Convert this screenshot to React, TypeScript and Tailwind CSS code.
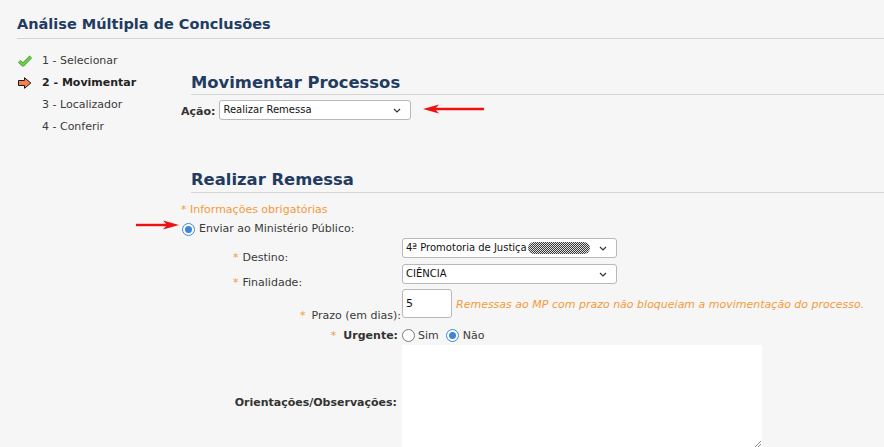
import React from "react";

function Radio({ checked }: { checked?: boolean }) {
  return checked ? (
    <span className="w-[13px] h-[13px] rounded-full border border-[#3b86d8] bg-white flex items-center justify-center shrink-0">
      <span className="w-[7px] h-[7px] rounded-full bg-[#3b86d8]" />
    </span>
  ) : (
    <span className="w-[13px] h-[13px] rounded-full border border-[#7a7a7a] bg-white shrink-0" />
  );
}

function Chevron() {
  return (
    <svg width="8" height="5" viewBox="0 0 8 5" className="shrink-0">
      <path d="M1 1 L4 4 L7 1" fill="none" stroke="#333" strokeWidth="1.2" />
    </svg>
  );
}

function Select({ w, children }: { w: string; children: React.ReactNode }) {
  return (
    <div className={`${w} h-[20px] bg-white border border-[#b8b8b8] rounded-[3px] flex items-center pl-[3px] pr-[9px] text-[10px] text-[#111]`}>
      <div className="flex-1 flex items-center min-w-0 whitespace-nowrap">{children}</div>
      <Chevron />
    </div>
  );
}

function RedArrow({ dir }: { dir: "left" | "right" }) {
  if (dir === "left") {
    return (
      <svg width="62" height="10" viewBox="0 0 62 10">
        <line x1="12" y1="5" x2="61" y2="5" stroke="#ee1111" strokeWidth="2.4" />
        <polygon points="0,5 16,0.5 12,5 16,9.5" fill="#ee1111" />
      </svg>
    );
  }
  return (
    <svg width="43" height="10" viewBox="0 0 43 10">
      <line x1="0" y1="5" x2="32" y2="5" stroke="#ee1111" strokeWidth="2.4" />
      <polygon points="43,5 27,0.5 31,5 27,9.5" fill="#ee1111" />
    </svg>
  );
}

export default function App() {
  return (
    <div className="w-[884px] h-[447px] overflow-hidden bg-[#f6f6f6] text-[#3a3a3a] text-[11px] leading-[14px] font-['DejaVu_Sans',sans-serif]">
      <h1 className="ml-[17px] mt-[15px] pb-[5px] border-b border-[#d4d4d4] text-[14.5px] leading-[18px] font-bold text-[#223b60]">
        Análise Múltipla de Conclusões
      </h1>
      <div className="flex">
        <div className="w-[181px] shrink-0 pl-[18px] pt-[11px]">
          <div className="h-[22px] flex items-center">
            <svg width="14" height="12" viewBox="0 0 14 12" className="mr-[10px]">
              <path d="M1.2 6.2 L5 9.8 L12.8 1.8" fill="none" stroke="#2f9a2a" strokeWidth="3.4" strokeLinejoin="round" />
              <path d="M1.2 6.2 L5 9.8 L12.8 1.8" fill="none" stroke="#74d04c" strokeWidth="2" strokeLinejoin="round" />
            </svg>
            <span>1 - Selecionar</span>
          </div>
          <div className="h-[22px] flex items-center">
            <svg width="14" height="12" viewBox="0 0 14 12" className="mr-[10px]">
              <polygon points="0.5,3.5 6.5,3.5 6.5,0.7 12.8,6 6.5,11.3 6.5,8.5 0.5,8.5" fill="#f7804e" stroke="#1a1a1a" strokeWidth="1" strokeLinejoin="miter" />
            </svg>
            <span className="font-bold text-[#222]">2 - Movimentar</span>
          </div>
          <div className="h-[22px] flex items-center pl-[24px]">3 - Localizador</div>
          <div className="h-[22px] flex items-center pl-[24px]">4 - Conferir</div>
        </div>
        <div className="flex-1">
          <h2 className="ml-[10px] mt-[34px] pb-[1px] border-b border-[#d4d4d4] text-[16.4px] leading-[20px] font-bold text-[#223b60]">
            Movimentar Processos
          </h2>
          <div className="mt-[5px] h-[20px] flex items-center">
            <span className="font-bold text-[#333] mt-[3px] mr-[4px]">Ação:</span>
            <Select w="w-[192px]">Realizar Remessa</Select>
            <span className="ml-[12px] mt-[-3px] flex">
              <RedArrow dir="left" />
            </span>
          </div>
          <h2 className="ml-[10px] mt-[50px] pb-[2px] border-b border-[#d4d4d4] text-[16.4px] leading-[20px] font-bold text-[#223b60]">
            Realizar Remessa
          </h2>
          <div className="mt-[10px] text-[#f39a3b]">* Informações obrigatórias</div>
          <div className="relative mt-[5px] h-[14px] flex items-center">
            <span className="absolute left-[-45px] top-[-2px] flex">
              <RedArrow dir="right" />
            </span>
            <span className="ml-[1px]">
              <Radio checked />
            </span>
            <span className="ml-[4px]">Enviar ao Ministério Público:</span>
          </div>

          <div className="mt-[2px] flex items-start h-[26px]">
            <div className="w-[221px] shrink-0 pt-[13px] pl-[52px] whitespace-nowrap">
              <span className="text-[#f39a3b] mr-[4px]">*</span>Destino:
            </div>
            <Select w="w-[215px]">
              <span>4ª Promotoria de Justiça</span>
              <span className="ml-[1px] w-[62px] h-[12px] rounded-full bg-[repeating-conic-gradient(#3a3a3a_0_25%,#e0e0e0_0_50%)] bg-[length:2px_2px]" />
            </Select>
          </div>

          <div className="flex items-start h-[25px]">
            <div className="w-[221px] shrink-0 pt-[12px] pl-[52px] whitespace-nowrap">
              <span className="text-[#f39a3b] mr-[4px]">*</span>Finalidade:
            </div>
            <Select w="w-[215px]">CIÊNCIA</Select>
          </div>

          <div className="flex items-start h-[33px]">
            <div className="w-[221px] shrink-0 pt-[20px] text-right pr-[1px] whitespace-nowrap">
              <span className="text-[#f39a3b] mr-[6px]">*</span>Prazo (em dias):
            </div>
            <div className="h-[29px] flex items-center">
              <div className="w-[50px] h-[29px] bg-white border border-[#b8b8b8] rounded-[3px] pl-[3px] flex items-center text-[11px] text-[#111]">
                5
              </div>
              <span className="ml-[4px] pt-[3px] italic text-[#f39a3b] whitespace-nowrap">
                Remessas ao MP com prazo não bloqueiam a movimentação do processo.
              </span>
            </div>
          </div>

          <div className="flex h-[18px] items-center mt-[4px]">
            <div className="w-[221px] shrink-0 text-right pr-[4px] pt-[1px] whitespace-nowrap">
              <span className="text-[#f39a3b] mr-[7px]">*</span>
              <span className="font-bold text-[#333]">Urgente:</span>
            </div>
            <Radio />
            <span className="ml-[3px] pt-[1px]">Sim</span>
            <span className="ml-[7px]">
              <Radio checked />
            </span>
            <span className="ml-[4px] pt-[1px]">Não</span>
          </div>

          <div className="mt-[1px] flex items-center">
            <div className="w-[221px] shrink-0 text-right pr-[5px] pt-[3px] font-bold text-[#333] whitespace-nowrap">
              Orientações/Observações:
            </div>
            <div className="relative w-[360px] h-[112px] bg-white">
              <svg width="6" height="6" viewBox="0 0 6 6" className="absolute right-[1px] bottom-[10px]">
                <path d="M0 6 L6 0 M3 6 L6 3" stroke="#888" strokeWidth="1" />
              </svg>
            </div>
          </div>
        </div>
      </div>
    </div>
  );
}
